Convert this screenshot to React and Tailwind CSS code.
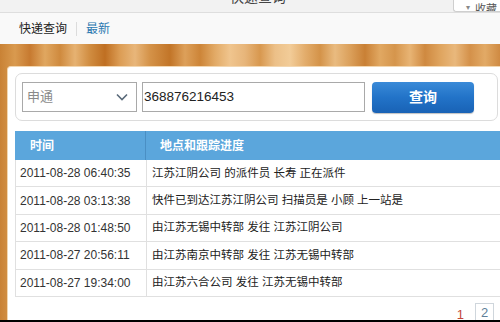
import React from 'react';

const rows = [
    { time: '2011-08-28 06:40:35', info: '江苏江阴公司 的派件员 长寿 正在派件' },
    { time: '2011-08-28 03:13:38', info: '快件已到达江苏江阴公司 扫描员是 小顾 上一站是' },
    { time: '2011-08-28 01:48:50', info: '由江苏无锡中转部 发往 江苏江阴公司' },
    { time: '2011-08-27 20:56:11', info: '由江苏南京中转部 发往 江苏无锡中转部' },
    { time: '2011-08-27 19:34:00', info: '由江苏六合公司 发往 江苏无锡中转部' },
];

const App = () => {
    return (
        <div className="w-[500px] h-[322px] overflow-hidden relative flex flex-col bg-white text-[#333] font-['Liberation_Sans','Noto_Sans_CJK_SC',sans-serif]">
            {/* window title */}
            <div className="h-[13px] shrink-0 bg-[#f2f2f2] border-b border-[#dedede] flex justify-center overflow-hidden">
                <span className="text-[14px] leading-[14px] -mt-[10px] ml-[16px] text-[#444]">快速查询</span>
            </div>
            <div className="absolute top-0 right-0 w-[47px] h-[12px] bg-white border-l border-b border-[#cfcfcf] rounded-bl-[3px] overflow-hidden flex items-end gap-[5px] pl-[12px]">
                <span className="text-[8px] leading-[8px] text-[#888] -mb-[1px]">▾</span>
                <span className="text-[11px] leading-[11px] text-[#555] -mb-[4px]">收藏</span>
            </div>

            {/* tabs */}
            <div className="h-[31px] shrink-0 bg-[#f9f9f9] flex items-center pl-[19px] text-[12px]">
                <span className="text-[#222]">快递查询</span>
                <span className="w-px h-[14px] bg-[#dcdcdc] mx-[9px]"></span>
                <span className="text-[#2b78b0]">最新</span>
            </div>

            {/* wood frame */}
            <div className="flex-1 flex flex-col min-h-0 pl-[7px] pt-[22px] bg-[linear-gradient(90deg,#c98235_0%,#d99a4f_3%,#c77a30_6%,#e0a760_9%,#cf8a3e_12%,#e6b272_15%,#d08c40_18%,#bf6f22_21%,#dc9d55_24%,#e8b67a_27%,#d49248_30%,#c27528_34%,#dda05a_37%,#cd8538_40%,#e2aa66_43%,#f0c58e_46%,#e7b57a_49%,#d8984f_52%,#ecc088_55%,#f2cc98_58%,#e3ad6c_61%,#d49349_64%,#e9bb80_67%,#dba05b_70%,#c98035_73%,#e1a862_76%,#d5954c_79%,#e8b474_82%,#cf8940_85%,#dfa45e_88%,#e9b87c_91%,#d4914a_94%,#e2aa66_97%,#cf8a42_100%)]">
                <div className="flex-1 flex flex-col min-h-0 bg-white rounded-tl-[4px] border-t border-l border-[#f3d7b0] pl-[7px] pt-[6px]">
                    {/* search panel */}
                    <div className="h-[48px] shrink-0 border border-[#dcdcdc] rounded-[7px] flex items-center pl-[6px] mr-[2px]">
                        <div className="w-[115px] h-[30px] border border-[#a9a9a9] flex items-center justify-between pl-[4px] pr-[8px]">
                            <span className="text-[13px] text-[#8a8a8a]">申通</span>
                            <svg width="12" height="8" viewBox="0 0 12 8" fill="none" stroke="#5a6a7a" strokeWidth="1.6">
                                <path d="M1 1.5 L6 6.5 L11 1.5" />
                            </svg>
                        </div>
                        <div className="w-[223px] h-[30px] ml-[5px] border border-[#a9a9a9] flex items-center pl-[1px]">
                            <span className="text-[13.5px] text-[#222]">368876216453</span>
                        </div>
                        <button className="w-[102px] h-[31px] ml-[7px] rounded-[4px] bg-[linear-gradient(180deg,#3a8ad8_0%,#2273c8_50%,#1962b5_100%)] shadow-[0_1px_1px_rgba(0,0,0,0.25)] text-white text-[14px] font-bold flex items-center justify-center">
                            查询
                        </button>
                    </div>

                    {/* result table */}
                    <div className="mt-[10px] shrink-0">
                        <div className="h-[29px] bg-[#5ba6dc] flex items-center text-white text-[12px] font-bold">
                            <div className="w-[131px] h-full pl-[15px] flex items-center border-r border-[#4a8fc4]">时间</div>
                            <div className="pl-[14px]">地点和跟踪进度</div>
                        </div>
                        {rows.map((r) => (
                            <div key={r.time} className="h-[27.4px] flex border-b border-l border-[#e0e0e0]">
                                <div className="w-[131px] shrink-0 pl-[4px] flex items-center text-[12px] text-[#333] border-r border-[#e0e0e0]">
                                    {r.time}
                                </div>
                                <div className="pl-[5px] flex items-center text-[11.5px] text-[#222] whitespace-nowrap">
                                    {r.info}
                                </div>
                            </div>
                        ))}
                    </div>

                    {/* pager */}
                    <div className="flex-1 flex items-start justify-end pt-[6px] pr-[6px] gap-[11px]">
                        <span className="text-[13px] leading-[16px] text-[#c4473a] mt-[4px]">1</span>
                        <span className="w-[19px] h-[20px] border border-[#cfd6dc] text-[13px] text-[#5f7f99] flex items-center justify-center">2</span>
                    </div>
                </div>
            </div>
            <div className="h-[2px] shrink-0 bg-black"></div>
        </div>
    );
};

export default App;
